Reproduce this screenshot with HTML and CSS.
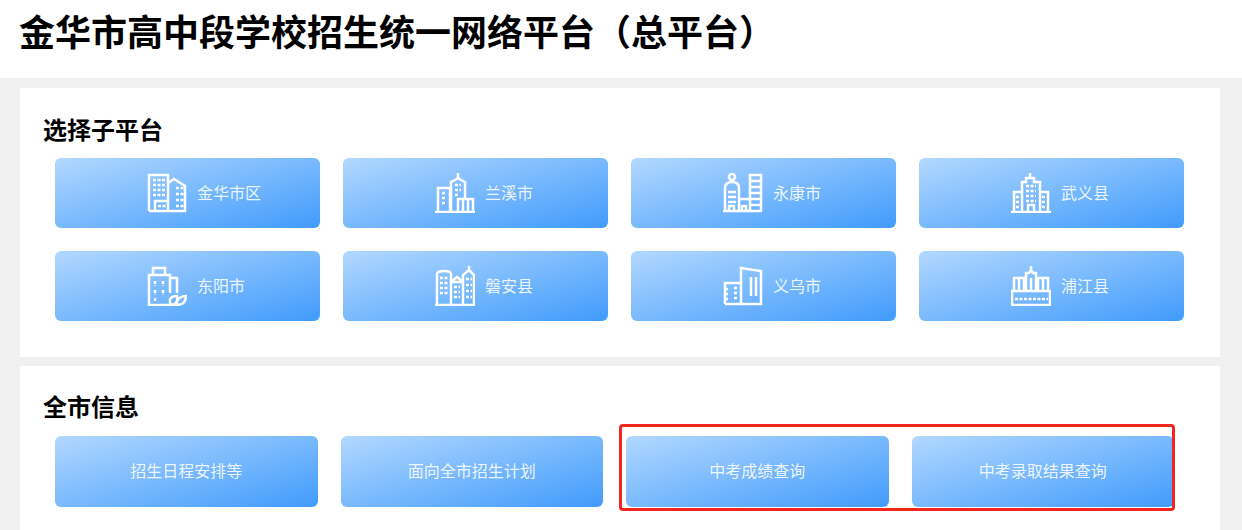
FILE: index.html

```html
<!DOCTYPE html>
<html lang="zh-CN">
<head>
  <meta charset="UTF-8" />
  <title>金华市高中段学校招生统一网络平台（总平台）</title>
  <link rel="stylesheet" href="styles.css">
</head>
<body>
  <h1 class="page-title">金华市高中段学校招生统一网络平台（总平台）</h1>

  <section class="panel">
    <h2 class="panel-title">选择子平台</h2>
    <div class="city-grid">
      <a class="btn city">
        <svg class="ico" viewBox="0 0 40 40"><path d="M2 38V2h19v36M2 38h36V13L27 6l-6 4"/><path class="win" d="M6 7h12M6 12h12M6 17h12M6 22h12"/><path d="M8 38V28h13"/><path class="win" d="M11 33h8M29 15h8M29 21h8M29 27h8M29 33h8"/></svg>
        <span>金华市区</span>
      </a>
      <a class="btn city">
        <svg class="ico" viewBox="0 0 40 40"><path d="M0 39h40M3 39V15h12M16 39V9l4-2 3-2V0v5l3 2 4 2v16M15 15v24M23 39V26h15v13M28 27v12M33 27v12"/><path class="win" d="M7 20h4M7 25h4M7 30h4M20 12h6M20 17h6M20 22h3"/></svg>
        <span>兰溪市</span>
      </a>
      <a class="btn city">
        <svg class="ico" viewBox="0 0 40 40"><circle cx="9" cy="4" r="3"/><path d="M0 38h39M2 38V15c0-4 3-6 7-6s7 2 7 6v23M5 19h8M5 24h8M5 29h8M6 38v-5h5v5M16 26h11M27 38V2h11v36M27 8h11M27 14h11M27 20h11M27 26h11M27 32h11M19 38v-5h4v5"/></svg>
        <span>永康市</span>
      </a>
      <a class="btn city">
        <svg class="ico" viewBox="0 0 40 40"><path d="M0 39h40M3 39V19h8M11 39V9h4V5h4V0v5h4v4h6v30M29 19h8v20M17 39v-7h6v7"/><path class="win" d="M15 13h10M15 18h10M15 23h10M15 28h10M5 24h4M5 29h4M5 34h4M31 24h4M31 29h4M31 34h4"/></svg>
        <span>武义县</span>
      </a>
      <a class="btn city">
        <svg class="ico" viewBox="0 0 40 40"><path d="M24 39H2V9h21v18M6 9V2h12v7M23 12h7v15"/><path class="win" d="M8 15v5M16 15v5M8 24v5M16 24v5M8 32v4"/><path d="M24 39c-3-6 0-9 6-9 1 5-1 9-6 9zM29 39c1-6 5-9 10-9 0 6-3 9-10 9z"/></svg>
        <span>东阳市</span>
      </a>
      <a class="btn city">
        <svg class="ico" viewBox="0 0 40 40"><path d="M0 39h40M2 39V8c0-2 3-3 7-3s7 1 7 3v31M16 16l6-5 6 5M16 39V16h12v23M28 39V9l6-5V0v4l5 5v30"/><path class="win" d="M5 12h8M5 17h8M5 22h8M5 27h8M19 21h6M19 26h6M19 31h6M31 13h6M31 19h6M31 25h6M31 31h6"/></svg>
        <span>磐安县</span>
      </a>
      <a class="btn city">
        <svg class="ico" viewBox="0 0 40 40"><path d="M2 38V17h16M18 38V2l20 3v33H2"/><path d="M28 11v19M33 11v19"/><path class="win" d="M2 23h4M2 28h4M2 33h4M11 22h4M11 27h4M11 32h4"/></svg>
        <span>义乌市</span>
      </a>
      <a class="btn city">
        <svg class="ico" viewBox="0 0 40 40"><path d="M1 25h38v14H1zM3 25V12h10v13M8 12v13M15 25V7h3l2-3V0v4l2 3h3v18M20 12v13M27 25V12h10v13M32 12v13"/><path class="win" d="M4 33h33"/></svg>
        <span>浦江县</span>
      </a>
    </div>
  </section>

  <section class="panel panel-last">
    <h2 class="panel-title">全市信息</h2>
    <div class="info-grid">
      <a class="btn info">招生日程安排等</a>
      <a class="btn info">面向全市招生计划</a>
      <a class="btn info">中考成绩查询</a>
      <a class="btn info">中考录取结果查询</a>
    </div>
    <div class="mark"></div>
  </section>
</body>
</html>
```

FILE: styles.css

```css
html, body {
  height: 530px;
  overflow: hidden;
}

body {
  margin: 0;
  background-color: #f0f0f0;
  color: #000;
  font-family: "Noto Sans CJK SC", "Noto Sans", sans-serif;
}

.page-title {
  margin: 0 0 10px;
  height: 78px;
  padding-left: 19px;
  background-color: #fff;
  font-size: 36px;
  font-weight: 700;
  line-height: 60px;
}

.panel {
  margin: 0 22px 9px 20px;
  background-color: #fff;
  position: relative;
}

.panel-last {
  height: 180px;
  margin-bottom: 0;
}

.panel-title {
  margin: 0 0 11px;
  padding: 23px 0 0 23px;
  font-size: 24px;
  font-weight: 700;
  line-height: 36px;
}

.panel-last .panel-title {
  margin-bottom: 12px;
  padding-top: 22px;
}

.city-grid {
  display: grid;
  grid-template-columns: repeat(4, 265px);
  gap: 23px;
  padding: 0 0 36px 35px;
}

.info-grid {
  display: grid;
  grid-template-columns: repeat(4, 262.5px);
  gap: 23px;
  padding-left: 35px;
}

.btn {
  display: flex;
  align-items: center;
  border-radius: 6px;
  background: linear-gradient(to bottom right, #b2d8ff, #419bfc);
  color: rgba(255, 255, 255, 0.88);
  font-size: 16px;
}

.city {
  height: 70px;
  padding-left: 92px;
}

.city span {
  margin-bottom: 2px;
}

.info {
  height: 71px;
  padding-bottom: 3px;
  box-sizing: border-box;
  justify-content: center;
}

.ico {
  width: 40px;
  height: 40px;
  margin-right: 10px;
  flex: none;
  fill: none;
  stroke: #fff;
  stroke-width: 2.5;
}

.ico .win {
  stroke-dasharray: 3 1.5;
}

.mark {
  position: absolute;
  left: 599px;
  top: 58px;
  width: 550px;
  height: 81px;
  border: 3px solid #f0261e;
  border-radius: 4px;
}
```
